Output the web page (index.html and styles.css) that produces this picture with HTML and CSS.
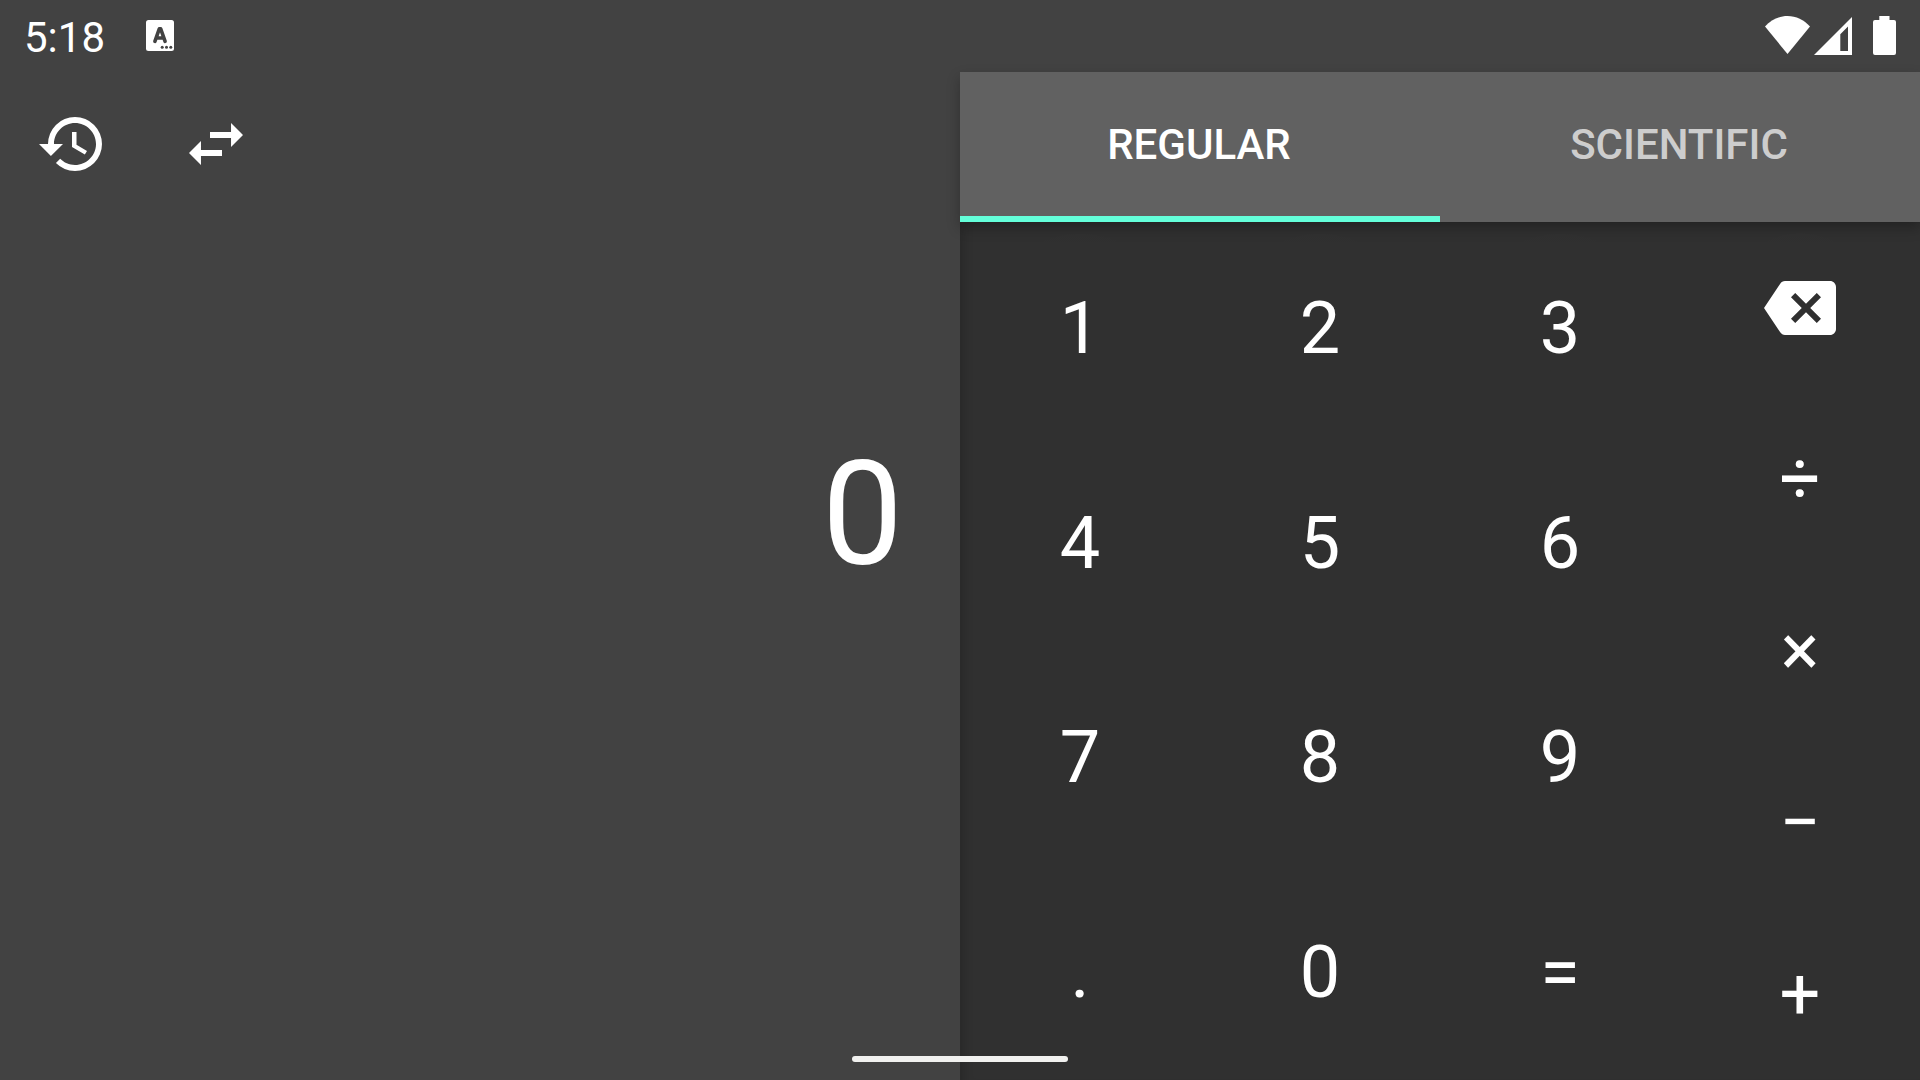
FILE: index.html
```html
<!DOCTYPE html>
<html lang="en">
<head>
<meta charset="utf-8">
<title>Calculator</title>
<link rel="stylesheet" href="styles.css">
</head>
<body>
<div class="app">
  <header class="status">
    <span class="clock">5:18</span>
    <svg class="badge" viewBox="0 0 28 31"><rect width="28" height="31" rx="2.5" fill="#fff"/><path d="M8.900 21.300 13.300 8.800h1.400l4.400 12.500M10.500 18h7" fill="none" stroke="#424242" stroke-width="3.600" stroke-linejoin="round" stroke-linecap="round"/><circle cx="16.2" cy="27.2" r="1.5" fill="#424242"/><circle cx="20.5" cy="27.2" r="1.5" fill="#424242"/><circle cx="24.8" cy="27.2" r="1.5" fill="#424242"/></svg>
    <div class="system">
      <svg class="wifi" viewBox="0 0 45 38"><path d="M0 10.500C6 4 14 0 22.500 0S39 4 45 10.500L22.500 38Z"/></svg>
      <svg class="signal" viewBox="0 0 38 38"><path fill-rule="evenodd" d="M38 0V38H0ZM34 9.500 26.300 17.200V34H34Z"/></svg>
      <svg class="battery" viewBox="0 0 23 39"><path d="M6.300 4V0H16.500V4H21Q23 4 23 6V37Q23 39 21 39H2Q0 39 0 37V6Q0 4 2 4Z"/></svg>
    </div>
  </header>
  <main class="main">
    <section class="display">
      <nav class="tools">
        <svg class="icon" viewBox="0 0 24 24"><path d="M13 3a9 9 0 0 0-9 9H1l3.890 3.890.070.140L9 12H6c0-3.870 3.130-7 7-7s7 3.130 7 7-3.130 7-7 7c-1.930 0-3.680-.790-4.940-2.060l-1.420 1.420A8.954 8.954 0 0 0 13 21a9 9 0 0 0 0-18Zm-1 5v5l4.280 2.540.720-1.210-3.500-2.080V8Z"/></svg>
        <svg class="icon" viewBox="0 0 24 24"><path d="M6.990 11 3 15l3.990 4v-3H14v-2H6.990v-3ZM21 9l-3.990-4v3H10v2h7.010v3L21 9Z"/></svg>
      </nav>
      <output class="result">0</output>
    </section>
    <section class="panel">
      <div class="tabs">
        <div class="tab active">REGULAR</div>
        <div class="tab">SCIENTIFIC</div>
      </div>
      <div class="keypad">
        <div class="digits">
          <span class="key">1</span><span class="key">2</span><span class="key">3</span>
          <span class="key">4</span><span class="key">5</span><span class="key">6</span>
          <span class="key">7</span><span class="key">8</span><span class="key">9</span>
          <span class="key">.</span><span class="key">0</span><span class="key">=</span>
        </div>
        <div class="operators">
          <span class="key"><svg class="backspace" viewBox="0 3 24 18"><path d="M22 3H7c-.690 0-1.230.350-1.590.880L0 12l5.410 8.110c.360.530.900.890 1.590.890h15c1.100 0 2-.900 2-2V5c0-1.100-.900-2-2-2Zm-3 12.590L17.590 17 14 13.410 10.410 17 9 15.590 12.590 12 9 8.410 10.410 7 14 10.590 17.590 7 19 8.410 15.410 12 19 15.590Z"/></svg></span>
          <span class="key">÷</span>
          <span class="key">×</span>
          <span class="key">−</span>
          <span class="key">+</span>
        </div>
      </div>
    </section>
  </main>
  <div class="home-bar"></div>
</div>
</body>
</html>
```
FILE: styles.css
```css
* { box-sizing: border-box; }
body { margin: 0; background: #424242; color: #fff; font-family: Roboto, sans-serif; }
svg { display: block; fill: #fff; }
.app { position: relative; width: 1920px; height: 1080px; display: flex; flex-direction: column; overflow: hidden; }
.status { height: 72px; display: flex; align-items: center; padding: 0 24px 1px; }
.clock { font-size: 42px; line-height: 50px; padding-top: 4px; }
.badge { width: 28px; height: 31px; margin-left: 41px; }
.system { margin-left: auto; display: flex; align-items: flex-end; height: 39px; }
.wifi { width: 45px; height: 38px; margin: 0 4px 1px 0; }
.signal { width: 38px; height: 38px; margin-right: 21px; }
.battery { width: 23px; height: 39px; }
.main { flex: 1; display: grid; grid-template-columns: 1fr 1fr; }
.display { display: flex; flex-direction: column; padding-right: 57px; }
.tools { height: 144px; display: flex; align-items: center; gap: 72px; padding-left: 36px; }
.icon { width: 72px; height: 72px; }
.result { font-size: 144px; line-height: 170px; text-align: right; margin-top: 214px; }
.panel { display: flex; flex-direction: column; background: #303030; }
.tabs { position: relative; height: 150px; display: flex; background: #616161; box-shadow: 0 6px 12px rgba(0, 0, 0, .27); }
.tab { flex: 1; display: flex; align-items: center; justify-content: center; padding-right: 2px; border-bottom: 6px solid transparent; font-size: 42px; font-weight: 500; color: rgba(255, 255, 255, .7); }
.tab.active { color: #fff; border-bottom-color: #64ffda; }
.keypad { position: relative; flex: 1; display: grid; grid-template-columns: 3fr 1fr; box-shadow: inset 12px 0 12px -10px rgba(0, 0, 0, .2); }
.digits { display: grid; grid-template: repeat(4, 1fr) / repeat(3, 1fr); }
.operators { display: grid; grid-template-rows: repeat(5, 1fr); }
.key { display: flex; align-items: center; justify-content: center; font-size: 72px; line-height: 84px; background: radial-gradient(circle at center, rgba(48, 48, 48, .5) 95px, transparent 96px); }
.operators .key { background: radial-gradient(circle at center, rgba(48, 48, 48, .5) 74px, transparent 75px); }
.backspace { width: 72px; height: 54px; }
.home-bar { position: absolute; left: 852px; bottom: 18px; width: 216px; height: 6px; border-radius: 3px; background: #f1f1ef; }
```
